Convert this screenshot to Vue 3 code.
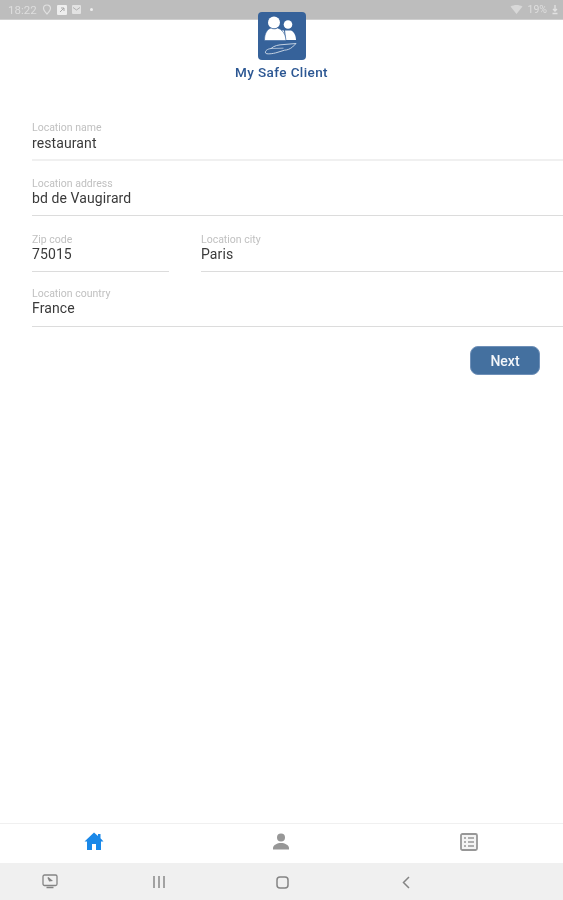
<template>
  <div class="screen">
    <div class="status-bar">
      <div class="status-left">
        <span class="status-text">18:22</span>
        <svg width="10" height="11" viewBox="0 0 10 11"><path d="M5 1C3 1 1.500 2.500 1.500 4.300 1.500 6.500 5 10 5 10s3.500-3.500 3.500-5.700C8.500 2.500 7 1 5 1z" fill="none" stroke="#e0e0e0" stroke-width="1.200" /></svg>
        <svg width="10" height="10" viewBox="0 0 10 10"><rect width="10" height="10" rx="1" fill="#eeeeee" /><path d="M3 7l4-4M4 3h3v3" fill="none" stroke="#a8a8a8" stroke-width="1" /></svg>
        <svg width="9" height="9" viewBox="0 0 9 9"><rect width="9" height="9" rx="1" fill="#e2e2e2" /><path d="M1 2.500l3.500 2.500L8 2.500" fill="none" stroke="#b0b0b0" stroke-width="1" /></svg>
        <span class="dot"></span>
      </div>
      <div class="status-right">
        <svg width="13" height="10" viewBox="0 0 13 10"><path d="M0.500 1.500C4 -0.500 9 -0.500 12.500 1.500L6.500 9z" fill="#d8d8d8" /></svg>
        <span class="status-text">19%</span>
        <svg width="6" height="10" viewBox="0 0 6 10"><path d="M3 0v6M1 4l2 2 2-2M0.500 8.500h5" fill="none" stroke="#e2e2e2" stroke-width="1.300" /></svg>
      </div>
    </div>

    <main class="content">
      <header class="brand">
        <div class="logo">
          <svg width="48" height="48" viewBox="0 0 48 48">
            <circle cx="30" cy="12.500" r="4.300" fill="#fff" />
            <path d="M24 18.500h9c2.800 1.200 4.800 4.500 5 9.500H25z" fill="#fff" />
            <path d="M26.500 18l1 10" stroke="#36629a" stroke-width="1" />
            <circle cx="16" cy="10.500" r="6" fill="#fff" />
            <path d="M6.500 28.500c0-7 2.500-11 6.500-12.500 2 1.200 4.500 1.200 6.500 0 4.500 1.500 8 5.500 8.500 12.500z" fill="#fff" stroke="#36629a" stroke-width="0.600" />
            <path d="M7.500 41c-0.500-2.500 2-4 5.500-4.500 3-2.800 7.500-3.800 13-4l12-1-3.500 3.500c-2.500 2-5 3-8 3.200l-7.500 2.300c-4 1.300-11 2-11.500 0.500z" fill="none" stroke="#d3dde9" stroke-width="0.900" />
            <path d="M13 36.500l12.500-0.300" stroke="#d3dde9" stroke-width="0.700" />
          </svg>
        </div>
        <h1 class="brand-name">My Safe Client</h1>
      </header>

      <form class="form" @submit.prevent>
        <div class="field field--soft">
          <label>Location name</label>
          <div class="value">restaurant</div>
        </div>
        <div class="field field--address">
          <label>Location address</label>
          <div class="value">bd de Vaugirard</div>
        </div>
        <div class="field-row">
          <div class="field field--zip">
            <label>Zip code</label>
            <div class="value">75015</div>
          </div>
          <div class="field field--city">
            <label>Location city</label>
            <div class="value">Paris</div>
          </div>
        </div>
        <div class="field field--country">
          <label>Location country</label>
          <div class="value">France</div>
        </div>
        <div class="actions">
          <button class="btn" type="submit">Next</button>
        </div>
      </form>
    </main>

    <nav class="tabs">
      <div class="tab">
        <svg width="20" height="19" viewBox="0 0 20 19"><path d="M10 0.500L0.500 9.500H3V18h5v-6h4v6h5V9.500h2.500L16.500 6.300V2h-2.500v1.900z" fill="#1a88e8" /></svg>
      </div>
      <div class="tab">
        <svg width="18" height="17" viewBox="0 0 18 17"><circle cx="9" cy="4.500" r="4" fill="#979797" /><path d="M1 16.500v-1.500c0-3 4.500-5 8-5s8 2 8 5v1.500z" fill="#979797" /></svg>
      </div>
      <div class="tab">
        <svg width="18" height="18" viewBox="0 0 18 18"><rect x="1" y="1" width="16" height="16" rx="1.500" fill="#f4f4f4" stroke="#979797" stroke-width="1.800" /><path d="M4 5h2M4 9h2M4 13h2M8 5h6M8 9h6M8 13h6" stroke="#979797" stroke-width="1.300" /></svg>
      </div>
    </nav>

    <div class="system-nav">
      <svg class="sys-a" width="16" height="15" viewBox="0 0 16 15"><rect x="1" y="1" width="14" height="10.500" rx="1.500" fill="none" stroke="#848484" stroke-width="1.300" /><path d="M6 3.500l3.500 3-2 0.300zM4.500 13.500h7" fill="none" stroke="#848484" stroke-width="1.300" /></svg>
      <svg class="sys-b" width="12" height="12" viewBox="0 0 12 12"><path d="M1 0v12M6 0v12M11 0v12" stroke="#8f8f8f" stroke-width="1.600" /></svg>
      <svg class="sys-c" width="13" height="13" viewBox="0 0 13 13"><rect x="1" y="1" width="11" height="11" rx="3" fill="none" stroke="#848484" stroke-width="1.500" /></svg>
      <svg class="sys-d" width="8" height="13" viewBox="0 0 8 13"><path d="M7 1L1.500 6.500 7 12" fill="none" stroke="#848484" stroke-width="1.500" /></svg>
    </div>
  </div>
</template>

<script setup>
</script>

<style>
html,
body {
  margin: 0;
  background: #fff;
}
</style>

<style scoped>
.screen {
  width: 563px;
  height: 900px;
  display: flex;
  flex-direction: column;
  overflow: hidden;
  font-family: Roboto, "Liberation Sans", sans-serif;
  background: #fff;
  filter: blur(0.4px);
}

.status-bar {
  height: 19px;
  flex: none;
  background: #bdbdbd;
  border-bottom: 1px solid #cfcfcf;
  display: flex;
  align-items: center;
  justify-content: space-between;
  padding: 0 5px 0 8px;
}

.status-left,
.status-right {
  display: flex;
  align-items: center;
  gap: 5px;
  filter: blur(0.6px);
}

.status-text {
  font-size: 11.500px;
  color: #dedede;
}

.status-right .status-text {
  font-size: 10.500px;
}

.dot {
  width: 3px;
  height: 3px;
  margin-left: 4px;
  border-radius: 50%;
  background: #eee;
}

.content {
  flex: 1;
  min-height: 0;
}

.brand {
  display: flex;
  flex-direction: column;
  align-items: center;
  margin-top: -8px;
  position: relative;
}

.logo {
  width: 48px;
  height: 48px;
  border-radius: 4px;
  background: #36629a;
}

.logo svg {
  display: block;
}

.brand-name {
  margin: 4px 0 0;
  font-size: 13.500px;
  font-weight: 500;
  line-height: 16px;
  letter-spacing: 0.400px;
  color: #2c5793;
}

.form {
  margin-top: 32px;
  padding-left: 32px;
}

.field {
  height: 56px;
  box-sizing: border-box;
  border-bottom: 1px solid #dcdcdc;
}

.field--soft {
  height: 49px;
  border-bottom: 2px solid #f0f0f0;
}

.field--address {
  height: 55px;
}

.field-row {
  display: flex;
  gap: 32px;
}

.field--zip {
  width: 137px;
  flex: none;
}

.field--city {
  flex: 1;
}

.field--country {
  height: 55px;
}

label {
  display: block;
  padding-top: 16px;
  font-size: 10.500px;
  line-height: 13px;
  color: #c0c0c0;
}

.field--soft label {
  padding-top: 9px;
  padding-bottom: 1px;
}

.field-row label {
  padding-top: 17px;
}

.field--country label {
  padding-top: 15px;
}

.value {
  font-size: 14px;
  line-height: 16px;
  letter-spacing: 0.100px;
  color: #3a3a3a;
}

.actions {
  display: flex;
  justify-content: flex-end;
  padding: 19px 23px 0 0;
}

.btn {
  width: 70px;
  height: 29px;
  padding: 0;
  border: 1px solid #6f90b8;
  border-radius: 8px;
  background: #44709f;
  color: #f3f6fa;
  font-family: inherit;
  font-size: 14px;
  font-weight: 500;
}

.tabs {
  height: 39px;
  flex: none;
  display: grid;
  grid-template-columns: repeat(3, 1fr);
  border-top: 1px solid #f0f0f0;
}

.tab {
  display: flex;
  align-items: center;
  justify-content: center;
  padding-bottom: 4px;
}

.system-nav {
  height: 37px;
  flex: none;
  background: #f0f0f0;
  position: relative;
}

.system-nav svg {
  position: absolute;
}

.sys-a {
  left: 42px;
  top: 11px;
}

.sys-b {
  left: 153px;
  top: 13px;
}

.sys-c {
  left: 276px;
  top: 13px;
}

.sys-d {
  left: 402px;
  top: 13px;
}
</style>
